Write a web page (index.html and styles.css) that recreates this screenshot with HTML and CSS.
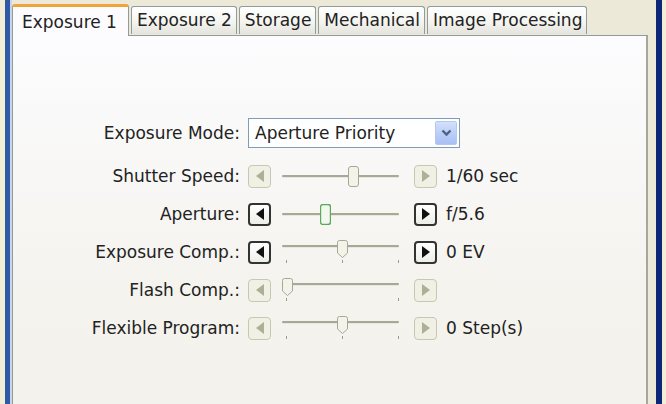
FILE: index.html
```html
<!DOCTYPE html>
<html lang="en">
<head>
<meta charset="UTF-8">
<title>Camera Control - Exposure 1</title>
<link rel="stylesheet" href="styles.css">
</head>
<body>
<div class="window">
  <div class="tabs">
    <div class="tab active">Exposure 1</div>
    <div class="tab">Exposure 2</div>
    <div class="tab">Storage</div>
    <div class="tab">Mechanical</div>
    <div class="tab">Image Processing</div>
  </div>

  <div class="panel">
    <div class="form">
      <div class="row first">
        <label>Exposure Mode:</label>
        <div class="select">
          <span class="selectText">Aperture Priority</span>
          <span class="selectBtn">
            <svg width="11" height="8" viewBox="0 0 11 8"><polyline points="1.5,1.5 5.5,5.5 9.5,1.5" fill="none" stroke="#4d6185" stroke-width="2.4"/></svg>
          </span>
        </div>
      </div>

      <div class="row">
        <label>Shutter Speed:</label>
        <div class="ctrl">
          <span class="btn off"><svg width="8" height="12" viewBox="0 0 8 12"><polygon points="8,0 0,6 8,12"/></svg></span>
          <div class="slider">
            <div class="track"></div>
            <span class="thumb" style="left:77px"><svg width="11" height="21" viewBox="0 0 11 21"><rect x="0.5" y="0.5" width="10" height="20" rx="2.5" fill="#f4f3ea" stroke="#a7a796"/></svg></span>
          </div>
          <span class="btn off"><svg width="8" height="12" viewBox="0 0 8 12"><polygon points="0,0 8,6 0,12"/></svg></span>
          <span class="value">1/60 sec</span>
        </div>
      </div>

      <div class="row">
        <label>Aperture:</label>
        <div class="ctrl">
          <span class="btn"><svg width="8" height="12" viewBox="0 0 8 12"><polygon points="8,0 0,6 8,12"/></svg></span>
          <div class="slider">
            <div class="track"></div>
            <span class="thumb" style="left:49px"><svg width="11" height="21" viewBox="0 0 11 21"><rect x="0.5" y="0.5" width="10" height="20" rx="2.5" fill="#f3f8ee" stroke="#5ea85e" stroke-width="1.4"/></svg></span>
          </div>
          <span class="btn"><svg width="8" height="12" viewBox="0 0 8 12"><polygon points="0,0 8,6 0,12"/></svg></span>
          <span class="value">f/5.6</span>
        </div>
      </div>

      <div class="row">
        <label>Exposure Comp.:</label>
        <div class="ctrl">
          <span class="btn"><svg width="8" height="12" viewBox="0 0 8 12"><polygon points="8,0 0,6 8,12"/></svg></span>
          <div class="slider ticks">
            <div class="track"></div>
            <span class="tick" style="left:15px"></span>
            <span class="tick" style="left:71px"></span>
            <span class="tick" style="left:127px"></span>
            <span class="thumb" style="left:66px"><svg width="11" height="18" viewBox="0 0 11 18"><path d="M0.5 2.5 Q0.5 0.5 2.5 0.5 L8.5 0.5 Q10.5 0.5 10.5 2.5 L10.5 13 L5.5 17.5 L0.5 13 Z" fill="#f4f3ea" stroke="#a7a796"/></svg></span>
          </div>
          <span class="btn"><svg width="8" height="12" viewBox="0 0 8 12"><polygon points="0,0 8,6 0,12"/></svg></span>
          <span class="value">0 EV</span>
        </div>
      </div>

      <div class="row">
        <label>Flash Comp.:</label>
        <div class="ctrl">
          <span class="btn off"><svg width="8" height="12" viewBox="0 0 8 12"><polygon points="8,0 0,6 8,12"/></svg></span>
          <div class="slider ticks">
            <div class="track"></div>
            <span class="tick" style="left:15px"></span>
            <span class="tick" style="left:127px"></span>
            <span class="thumb" style="left:11px"><svg width="11" height="18" viewBox="0 0 11 18"><path d="M0.5 2.5 Q0.5 0.5 2.5 0.5 L8.5 0.5 Q10.5 0.5 10.5 2.5 L10.5 13 L5.5 17.5 L0.5 13 Z" fill="#f4f3ea" stroke="#a7a796"/></svg></span>
          </div>
          <span class="btn off"><svg width="8" height="12" viewBox="0 0 8 12"><polygon points="0,0 8,6 0,12"/></svg></span>
        </div>
      </div>

      <div class="row">
        <label>Flexible Program:</label>
        <div class="ctrl">
          <span class="btn off"><svg width="8" height="12" viewBox="0 0 8 12"><polygon points="8,0 0,6 8,12"/></svg></span>
          <div class="slider ticks">
            <div class="track"></div>
            <span class="tick" style="left:15px"></span>
            <span class="tick" style="left:71px"></span>
            <span class="tick" style="left:127px"></span>
            <span class="thumb" style="left:66px"><svg width="11" height="18" viewBox="0 0 11 18"><path d="M0.5 2.5 Q0.5 0.5 2.5 0.5 L8.5 0.5 Q10.5 0.5 10.5 2.5 L10.5 13 L5.5 17.5 L0.5 13 Z" fill="#f4f3ea" stroke="#a7a796"/></svg></span>
          </div>
          <span class="btn off"><svg width="8" height="12" viewBox="0 0 8 12"><polygon points="0,0 8,6 0,12"/></svg></span>
          <span class="value">0 Step(s)</span>
        </div>
      </div>
    </div>
  </div>
</div>
</body>
</html>
```

FILE: styles.css
```css
html, body, div, label, span {
  margin: 0;
  padding: 0;
  box-sizing: border-box;
}

body {
  width: 666px;
  height: 404px;
  overflow: hidden;
  background-color: #f2efd6;
  font-family: "DejaVu Sans", Verdana, sans-serif;
  font-size: 17px;
  color: #222;
}

.window {
  display: flex;
  flex-direction: column;
  height: 404px;
  margin: 0 4px 0 5px;
  padding: 0 8px 0 2px;
  border-left: 5px solid #2f5ba6;
  border-right: 6px solid #0c2778;
  background-color: #ece9d8;
  box-shadow: inset 2px 0 0 #c9d5ea;
}

/* tab strip */
.tabs {
  display: flex;
  align-items: flex-end;
  height: 35px;
  gap: 2px;
}

.tab {
  height: 28px;
  padding: 3px 4px 0 5px;
  border: 1px solid #919b9c;
  border-bottom: none;
  border-radius: 3px 3px 0 0;
  background: linear-gradient(#ffffff, #f3f3ef 60%, #e4e3dc);
  margin-bottom: 1px;
  white-space: nowrap;
}

.tab.active {
  height: 32px;
  padding: 5px 11px 0 9px;
  margin-bottom: -1px;
  background: #fcfcfe;
  border-top: 3px solid #f0a23b;
  position: relative;
  z-index: 1;
}

/* panel */
.panel {
  flex: 1;
  border: 1px solid #919b9c;
  border-bottom: none;
  border-right: 2px solid #a8a69c;
  background: linear-gradient(#fcfcfe, #f4f3ee 70%, #f3f2ed);
  padding-top: 82px;
}

.form {
  padding-left: 77px;
}

.row {
  display: grid;
  grid-template-columns: 150px auto;
  column-gap: 8px;
  align-items: center;
  height: 38px;
}

.row.first {
  height: 30px;
  margin-bottom: 9px;
}

.row label {
  text-align: right;
  white-space: nowrap;
}

/* combo box */
.select {
  display: flex;
  align-items: center;
  width: 212px;
  height: 30px;
  border: 1px solid #7f9db9;
  background-color: #fff;
  padding: 2px;
}

.selectText {
  flex: 1;
  padding-left: 4px;
}

.selectBtn {
  display: flex;
  align-items: center;
  justify-content: center;
  width: 22px;
  height: 24px;
  border: 1px solid #b5c7f0;
  border-radius: 2px;
  background: linear-gradient(#d3e0fb, #b7cbf6 60%, #a9c0f3);
}

/* slider controls */
.ctrl {
  display: flex;
  align-items: center;
}

.btn {
  display: flex;
  align-items: center;
  justify-content: center;
  width: 23px;
  height: 23px;
  border: 2px solid #333;
  border-radius: 4px;
  background: linear-gradient(#ffffff, #eeeee8);
}

.btn polygon {
  fill: #111;
}

.btn.off {
  border: 1px solid #c9c6b1;
  background: #f1f0e4;
}

.btn.off polygon {
  fill: #aeaf95;
}

.slider {
  position: relative;
  width: 143px;
  height: 24px;
}

.track {
  position: absolute;
  left: 11px;
  right: 15px;
  top: 11px;
  height: 2px;
  border-radius: 1px;
  background-color: #a9a898;
  box-shadow: 0 1px 0 #e9e8df;
}

.slider.ticks .track {
  top: 5px;
}

.tick {
  position: absolute;
  top: 20px;
  width: 1px;
  height: 3px;
  background-color: #9d9c8c;
}

.thumb {
  position: absolute;
  top: 2px;
  display: block;
  line-height: 0;
}

.slider.ticks .thumb {
  top: 0;
}

.value {
  margin-left: 9px;
  white-space: nowrap;
}
```
